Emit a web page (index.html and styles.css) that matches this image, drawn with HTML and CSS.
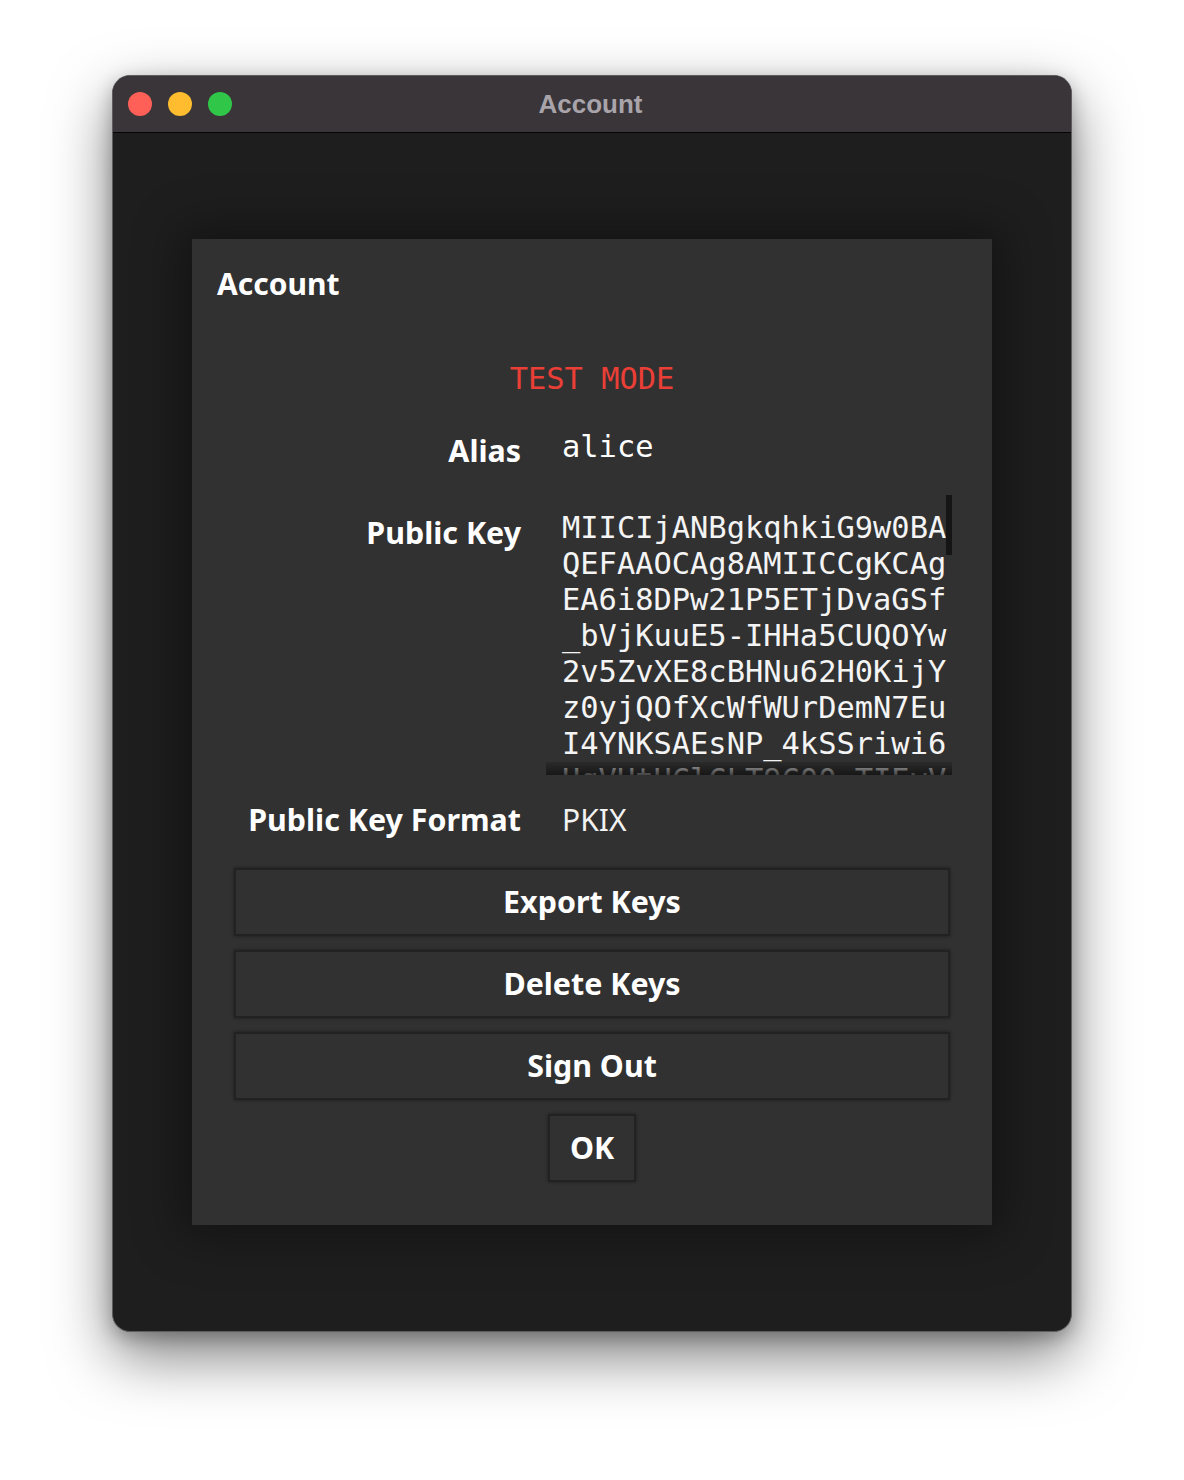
FILE: index.html
```html
<!DOCTYPE html>
<html lang="en">
<head>
<meta charset="utf-8">
<title>Account</title>
<link rel="stylesheet" href="styles.css">
</head>
<body>
<div class="stage">
  <div class="window">
    <div class="titlebar">
      <div class="lights">
        <span class="light light-red"></span>
        <span class="light light-yellow"></span>
        <span class="light light-green"></span>
      </div>
      <div class="title">Account</div>
      <div class="titlebar-spacer"></div>
    </div>
    <div class="content">
      <div class="panel">
        <h1 class="heading">Account</h1>
        <div class="test-mode">TEST MODE</div>
        <div class="form">
          <div class="label label-alias">Alias</div>
          <div class="value value-alias mono">alice</div>
          <div class="label label-key">Public Key</div>
          <div class="keybox">
            <div class="keytext mono">MIICIjANBgkqhkiG9w0BAQEFAAOCAg8AMIICCgKCAgEA6i8DPw21P5ETjDvaGSf_bVjKuuE5-IHHa5CUQOYw2v5ZvXE8cBHNu62H0KijYz0yjQOfXcWfWUrDemN7EuI4YNKSAEsNP_4kSSriwi6UqVHtUClCLT9C00-TIEyV</div>
            <div class="scroll-thumb"></div>
          </div>
          <div class="label label-format">Public Key Format</div>
          <div class="value sans">PKIX</div>
        </div>
        <div class="actions">
          <button class="btn btn-wide">Export Keys</button>
          <button class="btn btn-wide">Delete Keys</button>
          <button class="btn btn-wide">Sign Out</button>
          <button class="btn btn-ok">OK</button>
        </div>
      </div>
    </div>
  </div>
</div>
</body>
</html>
```

FILE: styles.css
```css
* { box-sizing: border-box; }

html, body {
  margin: 0;
  padding: 0;
  background: #ffffff;
}

.stage {
  width: 1184px;
  height: 1480px;
  padding: 75px 112px 0 112px;
}

.window {
  width: 960px;
  height: 1257px;
  border: 1px solid #5e5c5e;
  border-radius: 18px;
  overflow: hidden;
  background: #1e1e1e;
  box-shadow: 0 24px 60px rgba(0, 0, 0, 0.5), 0 6px 18px rgba(0, 0, 0, 0.25);
  display: flex;
  flex-direction: column;
}

.titlebar {
  height: 57px;
  flex: 0 0 57px;
  background: #393539;
  border-bottom: 1px solid #050505;
  display: grid;
  grid-template-columns: 1fr auto 1fr;
  align-items: center;
}

.lights {
  display: flex;
  gap: 16px;
  padding-left: 15px;
}

.light {
  width: 24px;
  height: 24px;
  border-radius: 50%;
  display: block;
}
.light-red { background: #fe5f57; }
.light-yellow { background: #febc2e; }
.light-green { background: #30c748; }

.title {
  font-family: "Liberation Sans", Arial, sans-serif;
  font-weight: 700;
  font-size: 26px;
  color: #a8a4a9;
  line-height: 29px;
  margin-left: -3px;
}

.content {
  flex: 1;
  display: flex;
  justify-content: center;
  align-items: flex-start;
  padding-top: 106px;
}

.panel {
  width: 800px;
  height: 986px;
  background: #313131;
  box-shadow: 0 0 45px 10px rgba(0, 0, 0, 0.38);
  padding-top: 25px;
  display: flex;
  flex-direction: column;
  color: #ffffff;
  font-family: "Noto Sans", "Open Sans", sans-serif;
}

.heading {
  margin: 0 0 0 25px;
  font-size: 30px;
  line-height: 40px;
  font-weight: 700;
}

.mono {
  font-family: "DejaVu Sans Mono", monospace;
  font-size: 30.4px;
  line-height: 36px;
}

.test-mode {
  margin-top: 57px;
  text-align: center;
  color: #ea3f36;
  font-family: "DejaVu Sans Mono", monospace;
  font-size: 30.4px;
  line-height: 36px;
}

.form {
  margin-top: 32px;
  width: 760px;
  display: grid;
  grid-template-columns: 329px 406px;
  column-gap: 25px;
  align-items: start;
}

.label {
  text-align: right;
  font-weight: 700;
  font-size: 30.4px;
  line-height: 32px;
  white-space: nowrap;
}

.label-alias { margin-top: 6px; }
.label-key { margin-top: 50px; }
.label-format { margin-top: 29px; }

.value {
  padding-left: 16px;
}

.value.sans {
  margin-top: 27px;
  font-size: 30px;
  line-height: 36px;
  font-weight: 400;
  color: #f2f2f2;
}

.keybox {
  position: relative;
  margin-top: 28px;
  height: 280px;
  overflow: hidden;
  padding: 15px 0 0 16px;
}

.keytext {
  width: 390px;
  word-break: break-all;
  color: #f4f4f4;
}

.keybox::after {
  content: "";
  position: absolute;
  left: 0;
  right: 0;
  bottom: 0;
  height: 13px;
  background: linear-gradient(to bottom, rgba(30, 30, 30, 0.35), rgba(16, 16, 16, 0.78));
}

.scroll-thumb {
  position: absolute;
  right: 0;
  top: 0;
  width: 6px;
  height: 60px;
  background: #151515;
}

.actions {
  margin-top: 30px;
  display: flex;
  flex-direction: column;
  align-items: center;
  gap: 14px;
}

.btn {
  font-family: "Noto Sans", "Open Sans", sans-serif;
  font-weight: 700;
  font-size: 30.4px;
  color: #ffffff;
  background: #313131;
  border: 2px solid #222222;
  box-shadow: 0 0 3px rgba(0, 0, 0, 0.45);
  height: 68px;
  padding: 0;
  margin: 0;
  line-height: 1;
}

.btn-wide { width: 716px; }
.btn-ok { width: 88px; }
```
